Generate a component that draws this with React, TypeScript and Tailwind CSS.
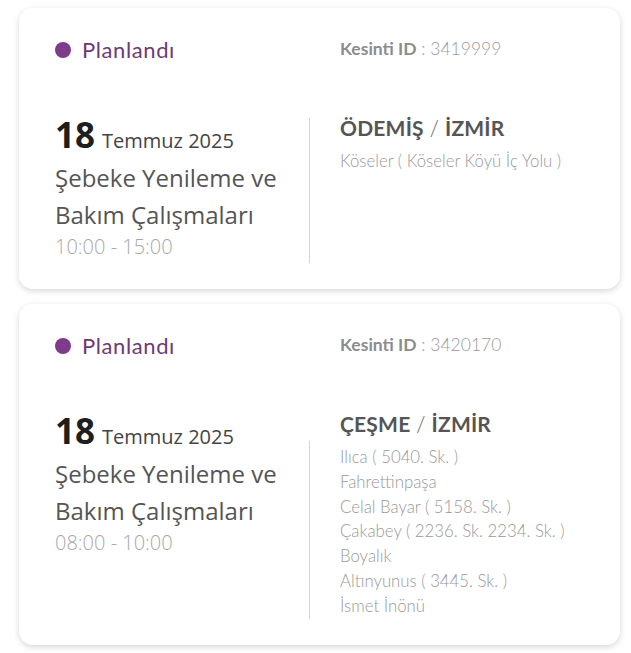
import React from "react";

interface Outage {
  id: string;
  day: string;
  month: string;
  title: string[];
  time: string;
  district: string;
  city: string;
  streets: string[];
  dividerTop: string;
}

const outages: Outage[] = [
  {
    id: "3419999",
    day: "18",
    month: "Temmuz 2025",
    title: ["Şebeke Yenileme ve", "Bakım Çalışmaları"],
    time: "10:00 - 15:00",
    district: "ÖDEMİŞ",
    city: "İZMİR",
    streets: ["Köseler ( Köseler Köyü İç Yolu )"],
    dividerTop: "mt-[3px]",
  },
  {
    id: "3420170",
    day: "18",
    month: "Temmuz 2025",
    title: ["Şebeke Yenileme ve", "Bakım Çalışmaları"],
    time: "08:00 - 10:00",
    district: "ÇEŞME",
    city: "İZMİR",
    streets: [
      "Ilıca ( 5040. Sk. )",
      "Fahrettinpaşa",
      "Celal Bayar ( 5158. Sk. )",
      "Çakabey ( 2236. Sk. 2234. Sk. )",
      "Boyalık",
      "Altınyunus ( 3445. Sk. )",
      "İsmet İnönü",
    ],
    dividerTop: "mt-[30px]",
  },
];

const OutageCard = ({ o }: { o: Outage }) => {
  return (
    <div className="ml-[19px] mr-[11px] rounded-[14px] bg-white shadow-[0_2px_6px_rgba(0,0,0,0.16)] pl-[36px] pr-4 pt-[27px] pb-[26px]">
      <div className="flex items-center">
        <div className="flex w-[285px] items-center">
          <span className="h-[16px] w-[16px] rounded-full bg-[#7d3b8a]" />
          <span className="ml-[11px] font-['Lato',sans-serif] text-[22px] tracking-[0.6px] leading-[30px] text-[#6e3a73]">
            Planlandı
          </span>
        </div>
        <div className="-mt-[2px] font-['Lato',sans-serif] text-[17.5px] leading-[26px] text-[#9a9a9a]">
          <span className="font-bold text-[#8c8c8c]">Kesinti ID</span>
          <span className="font-light"> : {o.id}</span>
        </div>
      </div>

      <div className="mt-[50px] flex items-start">
        <div className="w-[254px] pt-[2px] pb-[2px] font-['Open_Sans',sans-serif]">
          <div className="flex items-baseline leading-[36px]">
            <span className="text-[35px] font-bold text-[#1e1e1e]">{o.day}</span>
            <span className="ml-[7px] text-[20px] text-[#444]">{o.month}</span>
          </div>
          {o.title.map((t) => (
            <div key={t} className="text-[24px] leading-[37px] text-[#555]">
              {t}
            </div>
          ))}
          <div className="text-[20px] font-light leading-[28px] text-[#a8a8a8]">
            {o.time}
          </div>
        </div>

        <div className={`${o.dividerTop} w-px self-stretch bg-[#d4d4d4]`} />

        <div className="-mt-[2px] ml-[30px] font-['Lato',sans-serif]">
          <div className="text-[21px] leading-[30px] tracking-[0.2px] text-[#555]">
            <span className="font-bold">{o.district}</span>
            <span className="font-light"> / </span>
            <span className="font-bold">{o.city}</span>
          </div>
          <div className="mt-[6px] text-[16.8px] font-light leading-[24.8px] text-[#999]">
            {o.streets.map((s) => (
              <div key={s}>{s}</div>
            ))}
          </div>
        </div>
      </div>
    </div>
  );
};

export default function App() {
  return (
    <div className="min-h-[653px] bg-white pt-[8px] flex flex-col gap-[15px]">
      {outages.map((o) => (
        <OutageCard key={o.id} o={o} />
      ))}
    </div>
  );
}
